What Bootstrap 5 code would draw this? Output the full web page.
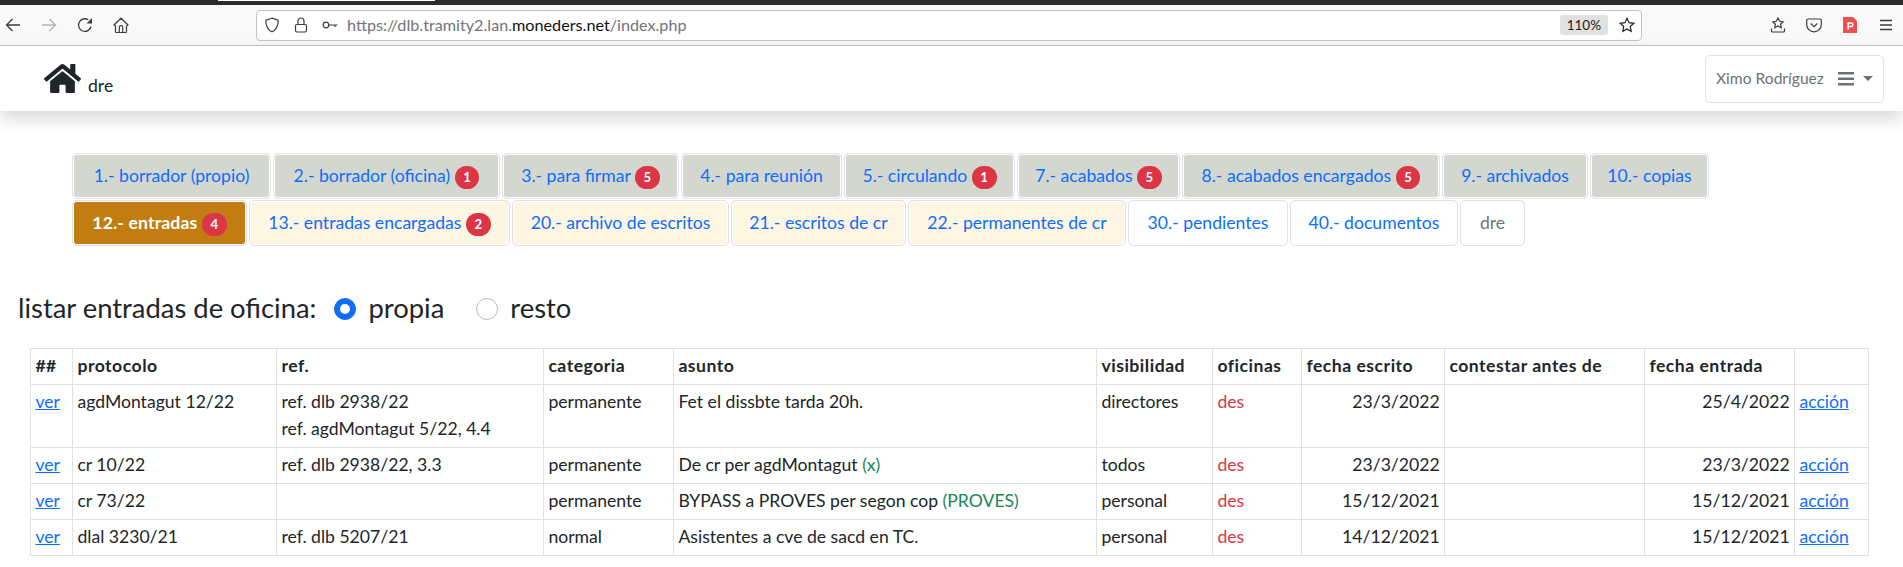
<!DOCTYPE html>
<html lang="es">
<head>
<meta charset="utf-8">
<title>dre</title>
<link href="https://cdn.jsdelivr.net/npm/bootstrap@5.3.0/dist/css/bootstrap.min.css" rel="stylesheet">
<style>
html{font-size:17.6px;}
body{font-family:"Lato","Noto Sans",sans-serif;color:#212529;overflow:hidden;height:567px;}
.topstrip{height:5px;background:#2b2a2c;}
.topstrip i{display:block;width:217px;height:1px;background:#fff;margin-left:218px;}
.ffbar{height:41px;background:#f9f9fa;border-bottom:1px solid #c4c4c4;padding-left:5px;gap:20px;}
.ffbtn{width:16px;height:16px;flex:none;color:#3d3d3f;}
.urlbox{margin:0 108px 0 107px;width:1386px;flex:none;height:31px;background:#fff;border:1px solid #c4c4c4;border-radius:4px;font-size:16.2px;color:#747478;padding-left:7px;}
.urlbox .ffbtn{margin-right:13px;}
.urlbox b{font-weight:400;color:#111;}
.urlbox .urltext{margin-left:-4px;}
.zoomtag{background:#e1e1e2;color:#222;border-radius:3px;font-size:13.5px;padding:1px 7px;margin:0 11px 0 auto;height:20px;line-height:18px;}
.urlbox .staricon{margin-right:6px;}
.siteheader{height:65px;padding:0 19px 0 42px;background:#fff;box-shadow:0 8px 16px rgba(0,0,0,.15);position:relative;}
.brandtxt{font-size:17.6px;color:#212529;margin-left:5px;line-height:1;padding-top:15px;}
.userbtn{width:179px;height:48px;border:1px solid #e3e3e3;border-radius:5px;font-size:15.6px;color:#6d7175;background:#fff;padding:0 10px;}
.mainmenu{margin:42px 0 0 71px;width:1680px;}
.mainmenu .nav-link{border:1px solid #dee2e6;border-radius:5px;margin:0 1px 1px 1px;box-shadow:inset 0 0 0 1px #fff;color:#0d6efd;white-space:nowrap;padding-left:0;padding-right:0;text-align:center;}
.mainmenu .nav-link.tab-gris{background:#d3d7cf;}
.mainmenu .nav-link.tab-crema{background:#fdf6e3;}
.mainmenu .nav-link.active{background:#c17d11;color:#fff;font-weight:700;letter-spacing:.15px;}
.mainmenu .nav-link.tab-dre{color:#6c757d;}
.mainmenu .badge{font-size:.75em;letter-spacing:0;}
.tw199{width:199px}.tw227{width:227px}.tw177{width:177px}.tw161{width:161px}.tw171{width:171px}.tw163{width:163px}.tw258{width:258px}.tw146{width:146px}.tw119{width:119px}
.tw175{width:175px}.tw261{width:261px}.tw217{width:217px}.tw175b{width:175px}.tw218{width:218px}.tw160{width:160px}.tw168{width:168px}.tw65{width:65px}
.filterline{margin:45px 0 0 18px;font-size:27.4px;line-height:1.2;color:#212529;}
.filterline .lead-in{margin-right:11px;}
.filterline .form-check-input{width:22px;height:22px;margin:0 12px 0 0;float:none;vertical-align:-2px;}
.filterline .form-check-input:not(:checked){border-color:#bdbdbd;}
.filterline label{margin-right:25px;}
.datatable{margin:23px 0 0 30px;width:1838px;table-layout:fixed;}
.datatable th{letter-spacing:.5px;}
</style>
</head>
<body>
<div class="topstrip"><i></i></div>
<div class="ffbar d-flex align-items-center">
  <svg class="ffbtn" viewBox="0 0 16 16" fill="none" stroke="currentColor" stroke-width="1.3"><path d="M15 8H1.500M7.500 2 1.500 8l6 6"/></svg>
  <svg class="ffbtn" viewBox="0 0 16 16" fill="none" stroke="#b5b5b7" stroke-width="1.3"><path d="M1 8h13.500M8.500 2l6 6-6 6"/></svg>
  <svg class="ffbtn" viewBox="0 0 16 16" fill="none" stroke="currentColor" stroke-width="1.3"><path d="M14 9.500A6.300 6.300 0 1 1 11.300 2.800"/><path d="M15 1v5.500H9.500z" fill="currentColor" stroke="none"/></svg>
  <svg class="ffbtn" viewBox="0 0 16 16" fill="none" stroke="currentColor" stroke-width="1.200"><path d="M1 8 8 1.200 15 8l-1.500 1V14.500a1 1 0 0 1-1 1h-9a1 1 0 0 1-1-1V9z"/><path d="M6.300 15.500V10.300a1.700 1.700 0 0 1 3.400 0v5.200"/></svg>
  <div class="urlbox d-flex align-items-center">
    <svg class="ffbtn" viewBox="0 0 16 16" fill="none" stroke="currentColor" stroke-width="1.200"><path d="M8 1.200 1.800 3.200c0 5.500 1.200 9.300 6.200 11.600 5-2.300 6.200-6.100 6.200-11.600z"/></svg>
    <svg class="ffbtn" viewBox="0 0 16 16" fill="none" stroke="currentColor" stroke-width="1.200"><rect x="2.500" y="7.500" width="11" height="7.500" rx="1.500"/><path d="M5 7.500V4a3 3 0 0 1 6 0v3.500"/></svg>
    <svg class="ffbtn" viewBox="0 0 16 16" fill="none" stroke="currentColor" stroke-width="1.200"><circle cx="4" cy="8" r="2.800"/><path d="M6.800 8h8.700M13 8v2"/></svg>
    <span class="urltext">https://dlb.tramity2.lan.<b>moneders.net</b>/index.php</span>
    <span class="zoomtag">110%</span>
    <svg class="ffbtn staricon" viewBox="0 0 16 16" fill="none" stroke="#222" stroke-width="1.200"><path d="M8 1.300l2 4.400 4.800.6-3.500 3.200.9 4.800L8 12l-4.200 2.300.9-4.800L1.200 6.300 6 5.700z"/></svg>
  </div>
  <svg class="ffbtn" viewBox="0 0 16 16" fill="none" stroke="currentColor" stroke-width="1.200"><path d="M8 1l1.700 3.300 3.500.5-2.600 2.400.6 3.500L8 9l-3.200 1.700.6-3.500-2.600-2.400 3.500-.5z"/><path d="M1.500 11.500V14a1 1 0 0 0 1 1h11a1 1 0 0 0 1-1v-2.500"/></svg>
  <svg class="ffbtn" viewBox="0 0 16 16" fill="none" stroke="currentColor" stroke-width="1.200"><path d="M2.200 2h11.600A1.500 1.500 0 0 1 15.300 3.500V7.500a7.300 7.300 0 0 1-14.600 0v-4A1.500 1.500 0 0 1 2.200 2zM4.800 6.500 8 9.600l3.200-3.100"/></svg>
  <svg class="ffbtn" viewBox="0 0 16 16"><path d="M1 0h10l4 4v12H1z" fill="#ef4f4f"/><path d="M6.200 12.500V6H9a1.800 1.800 0 0 1 0 3.600H6.200" fill="none" stroke="#fff" stroke-width="1.500"/></svg>
  <svg class="ffbtn" viewBox="0 0 16 16" fill="none" stroke="currentColor" stroke-width="1.300"><path d="M2 3.500h12M2 8h12M2 12.500h12"/></svg>
</div>
<header class="siteheader d-flex align-items-center justify-content-between">
  <div class="d-flex align-items-center">
    <svg width="41" height="33" viewBox="0 0 576 512" fill="#212529"><path d="M280.370 148.260 96 300.110V464a16 16 0 0 0 16 16l112.060-.29a16 16 0 0 0 15.920-16V368a16 16 0 0 1 16-16h64a16 16 0 0 1 16 16v95.640a16 16 0 0 0 16 16.050L464 480a16 16 0 0 0 16-16V300L295.670 148.260a12.190 12.190 0 0 0-15.300 0zM571.600 251.470 488 182.560V44.050a12 12 0 0 0-12-12h-56a12 12 0 0 0-12 12v72.610L318.470 43a48 48 0 0 0-61 0L4.340 251.470a12 12 0 0 0-1.600 16.900l25.500 31A12 12 0 0 0 45.150 301l235.220-193.740a12.190 12.190 0 0 1 15.300 0L530.900 301a12 12 0 0 0 16.900-1.600l25.500-31a12 12 0 0 0-1.700-16.930z"/></svg>
    <span class="brandtxt">dre</span>
  </div>
  <div class="userbtn d-flex align-items-center justify-content-between">
    <span>Ximo Rodríguez</span>
    <span class="d-flex align-items-center gap-2">
      <svg width="16" height="14" viewBox="0 0 16 14" fill="#6d7175"><rect width="16" height="2.500"/><rect y="5.500" width="16" height="2.500"/><rect y="11" width="16" height="2.500"/></svg>
      <svg width="10" height="5" viewBox="0 0 10 5" fill="#6d7175"><path d="M0 0h10L5 5z"/></svg>
    </span>
  </div>
</header>
<ul class="nav mainmenu">
  <li class="nav-item"><a class="nav-link tab-gris tw199" href="#">1.- borrador (propio)</a></li>
  <li class="nav-item"><a class="nav-link tab-gris tw227" href="#">2.- borrador (oficina) <span class="badge rounded-pill text-bg-danger">1</span></a></li>
  <li class="nav-item"><a class="nav-link tab-gris tw177" href="#">3.- para firmar <span class="badge rounded-pill text-bg-danger">5</span></a></li>
  <li class="nav-item"><a class="nav-link tab-gris tw161" href="#">4.- para reunión</a></li>
  <li class="nav-item"><a class="nav-link tab-gris tw171" href="#">5.- circulando <span class="badge rounded-pill text-bg-danger">1</span></a></li>
  <li class="nav-item"><a class="nav-link tab-gris tw163" href="#">7.- acabados <span class="badge rounded-pill text-bg-danger">5</span></a></li>
  <li class="nav-item"><a class="nav-link tab-gris tw258" href="#">8.- acabados encargados <span class="badge rounded-pill text-bg-danger">5</span></a></li>
  <li class="nav-item"><a class="nav-link tab-gris tw146" href="#">9.- archivados</a></li>
  <li class="nav-item"><a class="nav-link tab-gris tw119" href="#">10.- copias</a></li>
  <li class="w-100"></li>
  <li class="nav-item"><a class="nav-link active tw175" href="#">12.- entradas <span class="badge rounded-pill text-bg-danger">4</span></a></li>
  <li class="nav-item"><a class="nav-link tab-crema tw261" href="#">13.- entradas encargadas <span class="badge rounded-pill text-bg-danger">2</span></a></li>
  <li class="nav-item"><a class="nav-link tab-crema tw217" href="#">20.- archivo de escritos</a></li>
  <li class="nav-item"><a class="nav-link tab-crema tw175b" href="#">21.- escritos de cr</a></li>
  <li class="nav-item"><a class="nav-link tab-crema tw218" href="#">22.- permanentes de cr</a></li>
  <li class="nav-item"><a class="nav-link tw160" href="#">30.- pendientes</a></li>
  <li class="nav-item"><a class="nav-link tw168" href="#">40.- documentos</a></li>
  <li class="nav-item"><a class="nav-link tab-dre tw65" href="#">dre</a></li>
</ul>
<form class="filterline">
  <span class="lead-in">listar entradas de oficina:</span>
  <label><input class="form-check-input" type="radio" name="oficina" checked>propia</label>
  <label><input class="form-check-input" type="radio" name="oficina">resto</label>
</form>
<table class="table table-bordered table-sm datatable">
  <colgroup><col style="width:42px"><col style="width:204px"><col style="width:267px"><col style="width:130px"><col style="width:423px"><col style="width:116px"><col style="width:89px"><col style="width:143px"><col style="width:200px"><col style="width:150px"><col style="width:74px"></colgroup>
  <thead><tr><th>##</th><th>protocolo</th><th>ref.</th><th>categoria</th><th>asunto</th><th>visibilidad</th><th>oficinas</th><th>fecha escrito</th><th>contestar antes de</th><th>fecha entrada</th><th></th></tr></thead>
  <tbody>
    <tr><td><a href="#">ver</a></td><td>agdMontagut 12/22</td><td>ref. dlb 2938/22<br>ref. agdMontagut 5/22, 4.4</td><td>permanente</td><td>Fet el dissbte tarda 20h.</td><td>directores</td><td class="text-danger">des</td><td class="text-end">23/3/2022</td><td></td><td class="text-end">25/4/2022</td><td><a href="#">acción</a></td></tr>
    <tr><td><a href="#">ver</a></td><td>cr 10/22</td><td>ref. dlb 2938/22, 3.3</td><td>permanente</td><td>De cr per agdMontagut <span class="text-success">(x)</span></td><td>todos</td><td class="text-danger">des</td><td class="text-end">23/3/2022</td><td></td><td class="text-end">23/3/2022</td><td><a href="#">acción</a></td></tr>
    <tr><td><a href="#">ver</a></td><td>cr 73/22</td><td></td><td>permanente</td><td>BYPASS a PROVES per segon cop <span class="text-success">(PROVES)</span></td><td>personal</td><td class="text-danger">des</td><td class="text-end">15/12/2021</td><td></td><td class="text-end">15/12/2021</td><td><a href="#">acción</a></td></tr>
    <tr><td><a href="#">ver</a></td><td>dlal 3230/21</td><td>ref. dlb 5207/21</td><td>normal</td><td>Asistentes a cve de sacd en TC.</td><td>personal</td><td class="text-danger">des</td><td class="text-end">14/12/2021</td><td></td><td class="text-end">15/12/2021</td><td><a href="#">acción</a></td></tr>
  </tbody>
</table>
<script src="https://cdn.jsdelivr.net/npm/bootstrap@5.3.0/dist/js/bootstrap.bundle.min.js"></script>
</body>
</html>
